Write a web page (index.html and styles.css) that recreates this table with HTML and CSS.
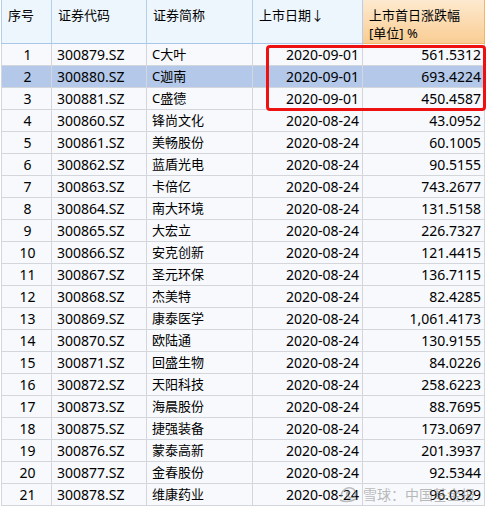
FILE: index.html
```html
<!DOCTYPE html>
<html>
<head>
<meta charset="utf-8">
<link rel="stylesheet" href="styles.css">
</head>
<body>
<div class="wrap">
<table class="grid">
<thead>
<tr>
<th class="c1">序号</th>
<th class="c2">证券代码</th>
<th class="c3">证券简称</th>
<th class="c4">上市日期↓</th>
<th class="c5 hot">上市首日涨跌幅<br>[单位] %</th>
</tr>
</thead>
<tbody>
<tr><td class="c1">1</td><td class="c2">300879.SZ</td><td class="c3">C大叶</td><td class="c4">2020-09-01</td><td class="c5">561.5312</td></tr>
<tr class="sel"><td class="c1">2</td><td class="c2">300880.SZ</td><td class="c3">C迦南</td><td class="c4">2020-09-01</td><td class="c5">693.4224</td></tr>
<tr><td class="c1">3</td><td class="c2">300881.SZ</td><td class="c3">C盛德</td><td class="c4">2020-09-01</td><td class="c5">450.4587</td></tr>
<tr><td class="c1">4</td><td class="c2">300860.SZ</td><td class="c3">锋尚文化</td><td class="c4">2020-08-24</td><td class="c5">43.0952</td></tr>
<tr><td class="c1">5</td><td class="c2">300861.SZ</td><td class="c3">美畅股份</td><td class="c4">2020-08-24</td><td class="c5">60.1005</td></tr>
<tr><td class="c1">6</td><td class="c2">300862.SZ</td><td class="c3">蓝盾光电</td><td class="c4">2020-08-24</td><td class="c5">90.5155</td></tr>
<tr><td class="c1">7</td><td class="c2">300863.SZ</td><td class="c3">卡倍亿</td><td class="c4">2020-08-24</td><td class="c5">743.2677</td></tr>
<tr><td class="c1">8</td><td class="c2">300864.SZ</td><td class="c3">南大环境</td><td class="c4">2020-08-24</td><td class="c5">131.5158</td></tr>
<tr><td class="c1">9</td><td class="c2">300865.SZ</td><td class="c3">大宏立</td><td class="c4">2020-08-24</td><td class="c5">226.7327</td></tr>
<tr><td class="c1">10</td><td class="c2">300866.SZ</td><td class="c3">安克创新</td><td class="c4">2020-08-24</td><td class="c5">121.4415</td></tr>
<tr><td class="c1">11</td><td class="c2">300867.SZ</td><td class="c3">圣元环保</td><td class="c4">2020-08-24</td><td class="c5">136.7115</td></tr>
<tr><td class="c1">12</td><td class="c2">300868.SZ</td><td class="c3">杰美特</td><td class="c4">2020-08-24</td><td class="c5">82.4285</td></tr>
<tr><td class="c1">13</td><td class="c2">300869.SZ</td><td class="c3">康泰医学</td><td class="c4">2020-08-24</td><td class="c5">1,061.4173</td></tr>
<tr><td class="c1">14</td><td class="c2">300870.SZ</td><td class="c3">欧陆通</td><td class="c4">2020-08-24</td><td class="c5">130.9155</td></tr>
<tr><td class="c1">15</td><td class="c2">300871.SZ</td><td class="c3">回盛生物</td><td class="c4">2020-08-24</td><td class="c5">84.0226</td></tr>
<tr><td class="c1">16</td><td class="c2">300872.SZ</td><td class="c3">天阳科技</td><td class="c4">2020-08-24</td><td class="c5">258.6223</td></tr>
<tr><td class="c1">17</td><td class="c2">300873.SZ</td><td class="c3">海晨股份</td><td class="c4">2020-08-24</td><td class="c5">88.7695</td></tr>
<tr><td class="c1">18</td><td class="c2">300875.SZ</td><td class="c3">捷强装备</td><td class="c4">2020-08-24</td><td class="c5">173.0697</td></tr>
<tr><td class="c1">19</td><td class="c2">300876.SZ</td><td class="c3">蒙泰高新</td><td class="c4">2020-08-24</td><td class="c5">201.3937</td></tr>
<tr><td class="c1">20</td><td class="c2">300877.SZ</td><td class="c3">金春股份</td><td class="c4">2020-08-24</td><td class="c5">92.5344</td></tr>
<tr><td class="c1">21</td><td class="c2">300878.SZ</td><td class="c3">维康药业</td><td class="c4">2020-08-24</td><td class="c5">96.0329</td></tr>
</tbody>
</table>
<div class="highlight"></div>
<div class="watermark">
<svg class="wm-logo" width="22" height="18" viewBox="0 0 22 18"><path d="M3 12 C3 6 8 2 13 3 C17 4 19 8 17 11 C15 14 10 13 9 10 C8 7 11 6 12 8" fill="none" stroke="#8a8a8a" stroke-width="1.5"/><path d="M2 15 C6 17 12 17 18 14" fill="none" stroke="#8a8a8a" stroke-width="1.5"/></svg>
<span>雪球：中国基金报</span>
</div>
</div>
</body>
</html>
```
FILE: styles.css
```css
html, body {
  margin: 0;
  padding: 0;
  background: #ffffff;
}
.wrap {
  position: relative;
  width: 489px;
  height: 507px;
  overflow: hidden;
}
.grid {
  border-collapse: collapse;
  table-layout: fixed;
  width: 483px;
  margin-left: 1px;
  font-family: "Noto Sans", "Noto Sans CJK SC", sans-serif;
  font-size: 14px;
  color: #000;
}
.grid th {
  height: 43px;
  padding: 6px 6px 0 6px;
  vertical-align: top;
  text-align: left;
  font-weight: normal;
  font-size: 13px;
  line-height: 18px;
  background: #eef6fd;
  border-left: 1px solid #b3cfec;
  border-right: 1px solid #b3cfec;
  border-bottom: 1px solid #a9c7e7;
  box-sizing: border-box;
}
.grid th.hot {
  background: linear-gradient(#fde9cf, #f9cd93);
  border-left: 1px solid #f2b56c;
  border-right: 1px solid #f2b56c;
  border-bottom: 1px solid #f2b56c;
}
.grid td {
  height: 22px;
  padding: 0 3px;
  line-height: 21px;
  background: #f7f9fc;
  border: 1px solid #d3d6da;
  white-space: nowrap;
  box-sizing: border-box;
}
.grid tr.sel td {
  background: #b4c9e9;
}
.c1 { width: 50px; }
.c2 { width: 95px; }
.c3 { width: 106px; }
.c4 { width: 110px; }
.c5 { width: 122px; }
td.c1 { text-align: center; padding-left: 5px; }
td.c2 { padding-left: 5px; }
td.c3 { padding-left: 5px; font-size: 13px; }
td.c4, td.c5 { text-align: right; }
.highlight {
  position: absolute;
  left: 266px;
  top: 45px;
  width: 220px;
  height: 66px;
  border: 3px solid #ee1111;
  border-radius: 4px;
  box-sizing: border-box;
}
.watermark {
  position: absolute;
  left: 338px;
  top: 484px;
  display: flex;
  align-items: center;
  gap: 3px;
  font-family: "Noto Sans CJK SC", sans-serif;
  font-size: 14px;
  color: rgba(120, 120, 120, 0.5);
}
.wm-logo {
  opacity: 0.55;
}
```
